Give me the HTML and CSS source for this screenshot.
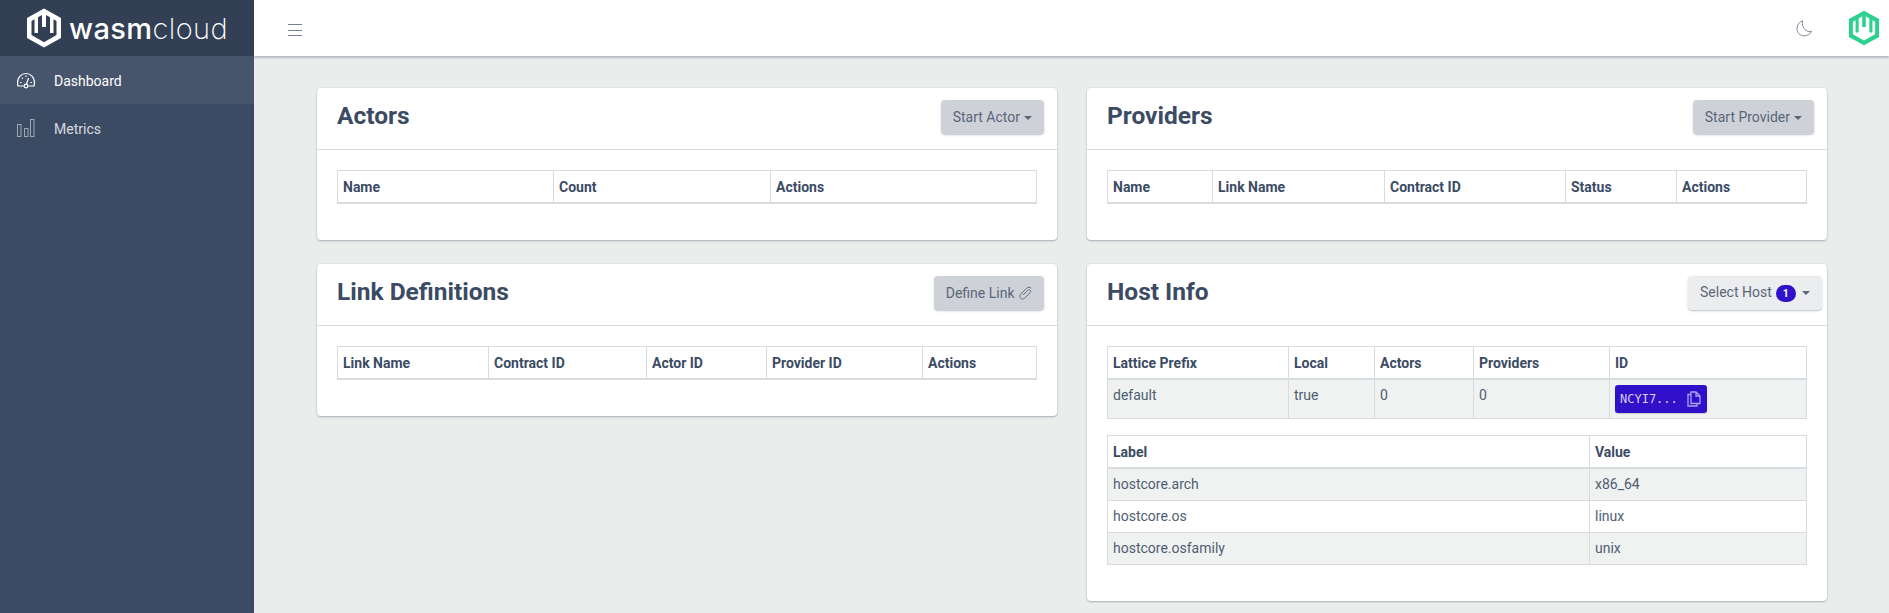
FILE: index.html
```html
<!DOCTYPE html>
<html>
<head>
    <title>wasmCloud Dashboard</title>
    <link rel="stylesheet" href="styles.css">
</head>
<body>
    <div class="sidebar">
        <div class="brand">
            <svg class="brand-logo" viewBox="0 0 36 40">
                <path fill="#fff" fill-rule="evenodd" d="M18 0.500 L35 10 V30 L18 39.500 L1 30 V10 Z M5.500 13 L8.500 11.300 V25 H12 V9.250 L16 6.900 V19 H20 V6.900 L24 9.250 V25 H27.500 V11.300 L30.500 13 V27 L18 34.200 L5.500 27 Z"/>
            </svg>
            <span class="brand-name"><b>wasm</b>cloud</span>
        </div>
        <a class="nav-item active">
            <svg class="nav-icon" viewBox="0 0 18 18" fill="none" stroke="currentColor" stroke-width="1.200">
                <path d="M6.800 15 H1 C0.700 13.800 0.500 12.800 0.500 11.500 C0.500 6.500 4.300 2.500 9 2.500 C13.700 2.500 17.500 6.500 17.500 11.500 C17.500 12.800 17.300 13.800 17 15 H11.200"/>
                <circle cx="9" cy="15" r="1.800"/>
                <path d="M9.500 13.300 L11.500 7 M3 11.500 H4.500 M4.800 6.700 L5.800 7.700 M9 4.500 V6 M15 11.500 H13.500"/>
            </svg>
            <span class="nav-label">Dashboard</span>
        </a>
        <a class="nav-item">
            <svg class="nav-icon" viewBox="0 0 18 18" fill="none" stroke="currentColor" stroke-width="1">
                <rect x="0.500" y="5.500" width="3.500" height="12"/>
                <rect x="7.500" y="9.500" width="3.500" height="8"/>
                <rect x="13.500" y="0.500" width="3.500" height="17"/>
            </svg>
            <span class="nav-label">Metrics</span>
        </a>
    </div>

    <div class="wrapper">
        <div class="topbar">
            <svg class="burger" viewBox="0 0 14 12" stroke="#768192" stroke-width="1">
                <path d="M0 0.500 H14 M0 6.500 H14 M0 11.500 H14"/>
            </svg>
            <svg class="moon" viewBox="0 0 18 18" fill="none" stroke="#768192" stroke-width="1">
                <path d="M7 1 C3.500 2 1 5.300 1 9 C1 13.400 4.400 16.800 8.600 16.800 C11.800 16.800 15 15 16.500 12 C11 13.500 5.500 8 7 1 Z"/>
            </svg>
            <svg class="avatar" viewBox="0 0 36 40">
                <path fill="#2dd08e" fill-rule="evenodd" d="M18 0.500 L35 10 V30 L18 39.500 L1 30 V10 Z M5.500 13 L8.500 11.300 V25 H12 V9.250 L16 6.900 V19 H20 V6.900 L24 9.250 V25 H27.500 V11.300 L30.500 13 V27 L18 34.200 L5.500 27 Z"/>
            </svg>
        </div>

        <div class="content">
            <div class="column">
                <div class="card">
                    <div class="card-header">
                        <h4>Actors</h4>
                        <button class="btn btn-secondary">Start Actor<span class="caret"></span></button>
                    </div>
                    <div class="card-body">
                        <table>
                            <colgroup><col class="a1"><col class="a2"><col></colgroup>
                            <tr><th>Name</th><th>Count</th><th>Actions</th></tr>
                        </table>
                    </div>
                </div>
                <div class="card">
                    <div class="card-header">
                        <h4>Link Definitions</h4>
                        <button class="btn btn-secondary btn-define">Define Link
                            <svg class="clip" viewBox="0 0 16 16" fill="none" stroke="currentColor" stroke-width="1">
                                <path d="M5.500 9.500 L10.500 4.500 C11.200 3.800 12.300 3.800 13 4.500 C13.700 5.200 13.700 6.300 13 7 L7 13 C5.800 14.200 4 14.200 2.800 13 C1.600 11.800 1.600 10 2.800 8.800 L9 2.600 C10.600 1 13 1 14.200 2.400"/>
                            </svg>
                        </button>
                    </div>
                    <div class="card-body">
                        <table>
                            <colgroup><col class="l1"><col class="l2"><col class="l3"><col class="l4"><col></colgroup>
                            <tr><th>Link Name</th><th>Contract ID</th><th>Actor ID</th><th>Provider ID</th><th>Actions</th></tr>
                        </table>
                    </div>
                </div>
            </div>

            <div class="column">
                <div class="card">
                    <div class="card-header">
                        <h4>Providers</h4>
                        <button class="btn btn-secondary">Start Provider<span class="caret"></span></button>
                    </div>
                    <div class="card-body">
                        <table>
                            <colgroup><col class="p1"><col class="p2"><col class="p3"><col class="p4"><col></colgroup>
                            <tr><th>Name</th><th>Link Name</th><th>Contract ID</th><th>Status</th><th>Actions</th></tr>
                        </table>
                    </div>
                </div>
                <div class="card">
                    <div class="card-header">
                        <h4>Host Info</h4>
                        <button class="btn btn-light">Select Host<span class="badge">1</span><span class="caret caret-wide"></span></button>
                    </div>
                    <div class="card-body">
                        <table class="host-table">
                            <colgroup><col class="h1"><col class="h2"><col class="h3"><col class="h4"><col></colgroup>
                            <tr><th>Lattice Prefix</th><th>Local</th><th>Actors</th><th>Providers</th><th>ID</th></tr>
                            <tr class="odd">
                                <td>default</td><td>true</td><td>0</td><td>0</td>
                                <td>
                                    <button class="btn-copy">NCYI7...
                                        <svg class="copy" viewBox="0 0 14 16" fill="none" stroke="currentColor" stroke-width="1.300">
                                            <path d="M4 1 H9 L13 5 V12.500 H4 Z M9 1 V5 H13"/>
                                            <path d="M4 3.500 H1 V15 H10 V12.500"/>
                                        </svg>
                                    </button>
                                </td>
                            </tr>
                        </table>
                        <table>
                            <colgroup><col class="v1"><col></colgroup>
                            <tr><th>Label</th><th>Value</th></tr>
                            <tr class="odd"><td>hostcore.arch</td><td>x86_64</td></tr>
                            <tr><td>hostcore.os</td><td>linux</td></tr>
                            <tr class="odd"><td>hostcore.osfamily</td><td>unix</td></tr>
                        </table>
                    </div>
                </div>
            </div>
        </div>
    </div>
</body>
</html>
```

FILE: styles.css
```css
* {
    box-sizing: border-box;
}

html, body {
    height: 100%;
    overflow: hidden;
}

body {
    margin: 0;
    display: flex;
    background-color: #ebedec;
    color: #3c4b64;
    font-family: Roboto, "Liberation Sans", sans-serif;
    font-size: 14px;
    line-height: 21px;
}

.sidebar {
    width: 254px;
    flex-shrink: 0;
    background-color: #3c4b64;
}

.brand {
    height: 56px;
    display: flex;
    align-items: center;
    padding-left: 26px;
    background-color: #323f54;
    color: #fff;
}

.brand-logo {
    width: 36px;
    height: 40px;
}

.brand-name {
    margin-left: 7px;
    font-family: Inter, sans-serif;
    font-size: 29px;
    font-weight: 200;
    letter-spacing: 0.400px;
}

.brand-name b {
    font-weight: 500;
}

.nav-item {
    height: 48px;
    display: flex;
    align-items: center;
    padding-left: 17px;
    color: rgba(255, 255, 255, 0.8);
}

.nav-item.active {
    background-color: #46546c;
    color: #fff;
}

.nav-icon {
    width: 18px;
    height: 18px;
    margin-right: 19px;
    opacity: 0.65;
}

.active .nav-icon {
    opacity: 1;
}

.nav-label {
    margin-top: 2px;
}

.wrapper {
    flex: 1;
    min-width: 0;
}

.topbar {
    height: 56px;
    display: flex;
    align-items: center;
    background-color: #fff;
    box-shadow: 0 2px 2px rgba(60, 75, 100, 0.3);
    padding-left: 34px;
}

.burger {
    width: 14px;
    height: 12px;
    margin-top: 4px;
}

.moon {
    width: 17px;
    height: 17px;
    margin-left: auto;
    margin-right: 35px;
}

.avatar {
    width: 32px;
    height: 36px;
    margin-right: 9px;
}

.content {
    display: grid;
    grid-template-columns: 740px 740px;
    gap: 30px;
    padding: 32px 0 0 63px;
}

.card {
    background-color: #fff;
    border-radius: 4px;
    margin-bottom: 24px;
    box-shadow: 0 1px 2px rgba(60, 75, 100, 0.35), 0 0 2px rgba(60, 75, 100, 0.12);
}

.card-header {
    height: 62px;
    display: flex;
    align-items: flex-start;
    justify-content: space-between;
    padding: 12px 13px 0 20px;
    border-bottom: 1px solid #d8dbe0;
}

.card-header h4 {
    margin: 1px 0 0;
    font-size: 24.500px;
    font-weight: 700;
    line-height: 29px;
}

.card-body {
    padding: 20px;
}

.btn {
    height: 34px;
    padding: 0 12px;
    border: none;
    border-radius: 4px;
    font-family: inherit;
    font-size: 14px;
    color: #5a6678;
    box-shadow: 0 1px 1px rgba(60, 75, 100, 0.2), 0 1px 3px rgba(60, 75, 100, 0.15);
}

.btn-secondary {
    background-color: #ced2d8;
}

.btn-define {
    padding: 0 11px 0 12px;
}

.btn-light {
    width: 134px;
    padding: 0 0 0 12px;
    text-align: left;
    background-color: #ebedef;
    margin-right: -8px;
}

.caret {
    display: inline-block;
    margin-left: 4px;
    vertical-align: 2px;
    border-top: 4px solid;
    border-left: 4px solid transparent;
    border-right: 4px solid transparent;
}

.caret-wide {
    margin-left: 6px;
}

.clip {
    width: 15px;
    height: 15px;
    vertical-align: -3px;
}

.badge {
    display: inline-block;
    min-width: 20px;
    margin-left: 4px;
    padding: 0 5px;
    border-radius: 10px;
    background-color: #3010c8;
    color: #fff;
    font-size: 10.500px;
    font-weight: 700;
    line-height: 17px;
    text-align: center;
}

table {
    width: 100%;
    table-layout: fixed;
    border-collapse: collapse;
    margin-bottom: 16px;
}

th, td {
    padding: 5px;
    text-align: left;
    vertical-align: top;
    border: 1px solid #d8dbe0;
}

th {
    height: 32px;
    padding: 6px 5px 4px;
    font-weight: 700;
    border-bottom-width: 2px;
}

td {
    height: 32px;
    color: #4f5d73;
}

.odd td {
    background-color: #f0f2f1;
}

.btn-copy {
    display: block;
    width: 92px;
    height: 28px;
    padding: 0 0 0 5px;
    text-align: left;
    border: none;
    border-radius: 3px;
    background-color: #3010c8;
    color: #d8d0f8;
    font-family: "DejaVu Sans Mono", monospace;
    font-size: 12px;
    box-shadow: 0 1px 1px rgba(60, 75, 100, 0.25);
}

.copy {
    width: 14px;
    height: 16px;
    margin-left: 2px;
    vertical-align: -4px;
    color: #b0a2f2;
}

.a1 { width: 216px; }
.a2 { width: 217px; }

.l1 { width: 151px; }
.l2 { width: 158px; }
.l3 { width: 120px; }
.l4 { width: 156px; }

.p1 { width: 105px; }
.p2 { width: 172px; }
.p3 { width: 181px; }
.p4 { width: 111px; }

.h1 { width: 181px; }
.h2 { width: 86px; }
.h3 { width: 99px; }
.h4 { width: 136px; }

.v1 { width: 482px; }
```
